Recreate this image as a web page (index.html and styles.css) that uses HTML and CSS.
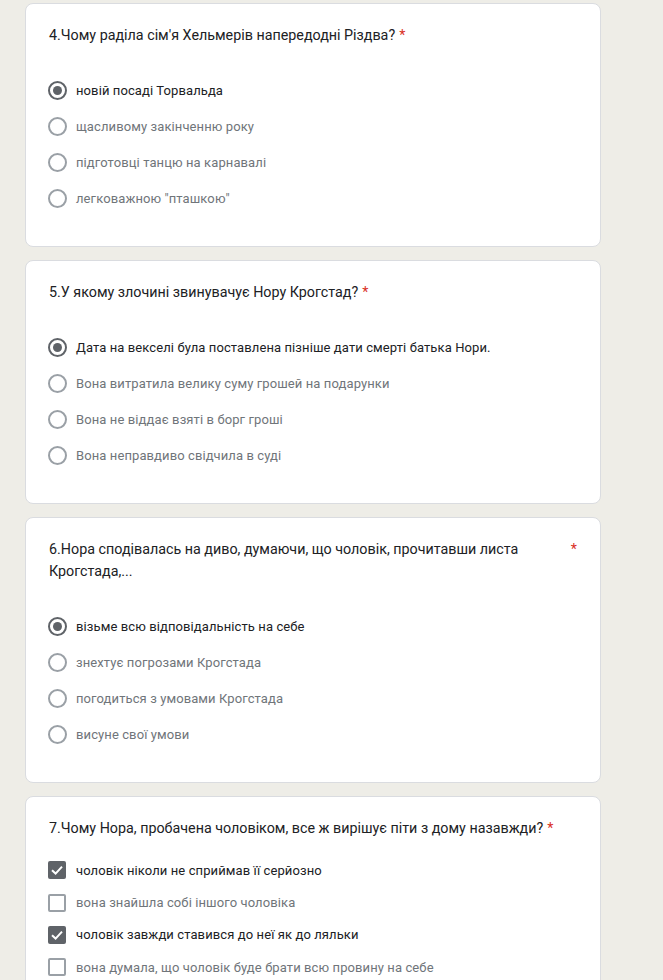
FILE: index.html
```html
<!DOCTYPE html>
<html lang="uk">
<head>
<meta charset="utf-8">
<link rel="stylesheet" href="styles.css">
</head>
<body>
<div class="page">
  <section class="card">
    <div class="q"><span class="q-text">4.Чому раділа сім'я Хельмерів напередодні Різдва?</span><span class="req">*</span></div>
    <ul class="opts">
      <li class="opt on"><span class="radio"></span><span>новій посаді Торвальда</span></li>
      <li class="opt"><span class="radio"></span><span>щасливому закінченню року</span></li>
      <li class="opt"><span class="radio"></span><span>підготовці танцю на карнавалі</span></li>
      <li class="opt"><span class="radio"></span><span>легковажною "пташкою"</span></li>
    </ul>
  </section>
  <section class="card">
    <div class="q"><span class="q-text">5.У якому злочині звинувачує Нору Крогстад?</span><span class="req">*</span></div>
    <ul class="opts">
      <li class="opt on"><span class="radio"></span><span>Дата на векселі була поставлена пізніше дати смерті батька Нори.</span></li>
      <li class="opt"><span class="radio"></span><span>Вона витратила велику суму грошей на подарунки</span></li>
      <li class="opt"><span class="radio"></span><span>Вона не віддає взяті в борг гроші</span></li>
      <li class="opt"><span class="radio"></span><span>Вона неправдиво свідчила в суді</span></li>
    </ul>
  </section>
  <section class="card">
    <div class="q"><span class="q-text">6.Нора сподівалась на диво, думаючи, що чоловік, прочитавши листа Крогстада,...</span><span class="req">*</span></div>
    <ul class="opts">
      <li class="opt on"><span class="radio"></span><span>візьме всю відповідальність на себе</span></li>
      <li class="opt"><span class="radio"></span><span>знехтує погрозами Крогстада</span></li>
      <li class="opt"><span class="radio"></span><span>погодиться з умовами Крогстада</span></li>
      <li class="opt"><span class="radio"></span><span>висуне свої умови</span></li>
    </ul>
  </section>
  <section class="card">
    <div class="q"><span class="q-text">7.Чому Нора, пробачена чоловіком, все ж вирішує піти з дому назавжди?</span><span class="req">*</span></div>
    <ul class="opts checks">
      <li class="opt on"><span class="box"><svg viewBox="0 0 18 18" width="18" height="18"><path d="M4 9.2 L7.6 12.6 L14 5.6" fill="none" stroke="#fff" stroke-width="2"/></svg></span><span>чоловік ніколи не сприймав її серйозно</span></li>
      <li class="opt"><span class="box"></span><span>вона знайшла собі іншого чоловіка</span></li>
      <li class="opt on"><span class="box"><svg viewBox="0 0 18 18" width="18" height="18"><path d="M4 9.2 L7.6 12.6 L14 5.6" fill="none" stroke="#fff" stroke-width="2"/></svg></span><span>чоловік завжди ставився до неї як до ляльки</span></li>
      <li class="opt"><span class="box"></span><span>вона думала, що чоловік буде брати всю провину на себе</span></li>
    </ul>
  </section>
</div>
</body>
</html>
```

FILE: styles.css
```css
* { box-sizing: border-box; }
html, body {
  margin: 0;
  padding: 0;
  background: #eeede7;
  font-family: Roboto, "Noto Sans", Arial, sans-serif;
  height: 980px;
  overflow: hidden;
}
.page {
  padding: 3px 0 0 25px;
  display: flex;
  flex-direction: column;
  gap: 13px;
  width: 601px;
}
.card {
  background: #fff;
  border: 1px solid #dadce0;
  border-radius: 8px;
  padding: 20px 23px 30px 23px;
}
.q {
  display: flex;
  align-items: flex-start;
  font-size: 14.3px;
  line-height: 22px;
  color: #202124;
}
.q-text { flex: 0 1 auto; }
.req {
  color: #d93025;
  margin-left: 4px;
  flex: none;
}
.opts {
  list-style: none;
  margin: 26px 0 0 0;
  padding: 0;
}
.checks { margin-top: 15px; }
.opt {
  display: flex;
  align-items: center;
  height: 36px;
  font-size: 13px;
  color: #70757a;
  letter-spacing: 0.1px;
}
.checks .opt { height: 32.4px; }
.opt.on { color: #202124; }
.radio {
  width: 19px;
  height: 19px;
  border: 2px solid #9aa0a6;
  border-radius: 50%;
  margin: 0 9px 0 -1px;
  flex: none;
  display: flex;
  align-items: center;
  justify-content: center;
}
.opt.on .radio { border-color: #5f6368; }
.opt.on .radio::after {
  content: "";
  width: 9px;
  height: 9px;
  border-radius: 50%;
  background: #5f6368;
}
.box {
  width: 18px;
  height: 18px;
  border: 2px solid #9aa0a6;
  border-radius: 2px;
  margin: 0 10px 0 -1px;
  flex: none;
  display: flex;
  align-items: center;
  justify-content: center;
}
.box svg { display: block; }
.opt.on .box {
  background: #5f6368;
  border: none;
}
```
